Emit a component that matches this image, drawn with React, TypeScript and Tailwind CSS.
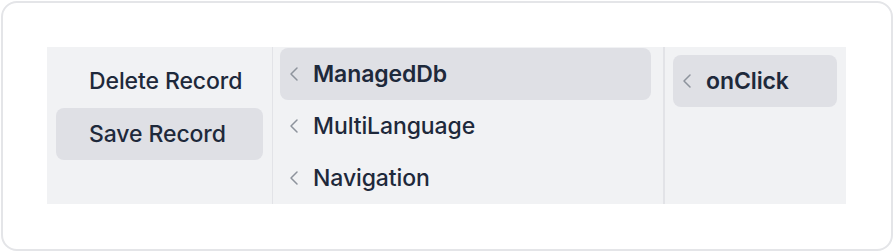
import { ChevronLeft } from 'lucide-react';

type Item = { label: string; active?: boolean; bold?: boolean; chevron?: boolean };

const Row = ({ item }: { item: Item }) => (
  <div
    className={`flex h-[52px] items-center rounded-lg pl-[2px] ${item.active ? 'bg-[#dfe0e5]' : ''} ${
      item.bold ? 'font-semibold' : 'font-medium'
    }`}
  >
    <span className="flex w-6 shrink-0 items-center justify-center">
      {item.chevron && <ChevronLeft size={24} strokeWidth={1.5} className="text-[#8d939c]" />}
    </span>
    <span className="ml-[7px] whitespace-nowrap text-[23px] tracking-[-0.1px] text-[#1e293b]">{item.label}</span>
  </div>
);

const App = () => {
  const first: Item[] = [{ label: 'Delete Record' }, { label: 'Save Record', active: true }];
  const second: Item[] = [
    { label: 'ManagedDb', active: true, bold: true, chevron: true },
    { label: 'MultiLanguage', chevron: true },
    { label: 'Navigation', chevron: true },
  ];
  const third: Item[] = [{ label: 'onClick', active: true, bold: true, chevron: true }];

  return (
    <div className="h-[252px] w-[894px] bg-white p-px" style={{ fontFamily: 'Inter, "Noto Sans", sans-serif' }}>
      <div className="h-full w-full rounded-2xl border-2 border-[#e4e5e8] pl-[44px] pt-[44px]">
        <div className="flex h-[157px] w-[799px] overflow-hidden bg-[#f1f2f4]">
          {/* actions */}
          <div className="flex w-[226px] shrink-0 flex-col gap-px border-r border-[#e2e3e7] px-[9px] py-2">
            {first.map((item) => (
              <Row key={item.label} item={item} />
            ))}
          </div>

          {/* modules */}
          <div className="flex w-[392px] shrink-0 flex-col overflow-hidden border-r-2 border-[#e2e3e7] pl-[7px] pr-3 pt-px">
            {second.map((item) => (
              <Row key={item.label} item={item} />
            ))}
          </div>

          {/* events */}
          <div className="flex flex-1 flex-col p-2 pr-[9px]">
            {third.map((item) => (
              <Row key={item.label} item={item} />
            ))}
          </div>
        </div>
      </div>
    </div>
  );
};

export default App;
